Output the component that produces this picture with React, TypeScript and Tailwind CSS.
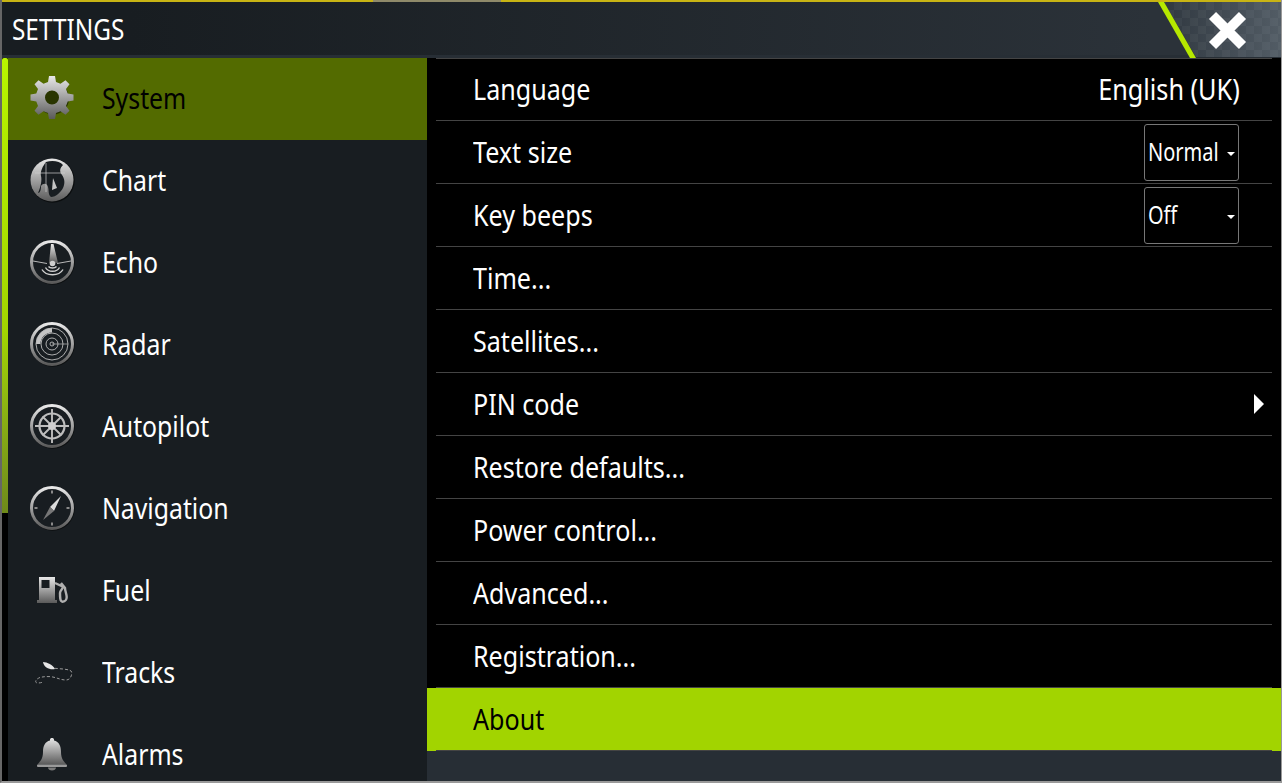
import { ReactNode } from 'react';

const font = { fontFamily: '"Noto Sans", "Open Sans", sans-serif' };

function Silver({ id }: { id: string }) {
  return (
    <defs>
      <linearGradient id={id} x1="0" y1="0" x2="0" y2="1">
        <stop offset="0" stopColor="#e8e8e8" />
        <stop offset="1" stopColor="#5a5a5a" />
      </linearGradient>
    </defs>
  );
}

function Ring({ id }: { id: string }) {
  return (
    <>
      <Silver id={id} />
      <circle cx="24.7" cy="24.7" r="22" fill="#000" opacity="0.55" />
      <circle cx="24" cy="24" r="20.5" fill="#181d21" stroke={`url(#${id})`} strokeWidth="3" />
    </>
  );
}

function Icon({ children }: { children: ReactNode }) {
  return (
    <svg width="48" height="48" viewBox="0 0 48 48" className="-mt-[2px] shrink-0">
      {children}
    </svg>
  );
}

const GearIcon = () => (
  <Icon>
    <Silver id="gear" />
    <g transform="translate(0 -0.5)">
      <circle cx="25" cy="25" r="16" fill="#000" opacity="0.5" />
      <path
        fillRule="evenodd"
        fill="url(#gear)"
        d="M21 2.5H27L28 8.5L32.5 10.3L37.5 6.8L41.5 10.8L38 15.5L39.7 20L45.5 21V27L39.7 28L38 32.5L41.5 37.2L37.5 41.2L32.5 37.7L28 39.5L27 45.5H21L20 39.5L15.5 37.7L10.5 41.2L6.5 37.2L10 32.5L8.3 28L2.5 27V21L8.3 20L10 15.5L6.5 10.8L10.5 6.8L15.5 10.3L20 8.5ZM24 17A7 7 0 1 0 24 31A7 7 0 1 0 24 17Z"
      />
    </g>
  </Icon>
);

const ChartIcon = () => (
  <Icon>
    <Silver id="chart" />
    <circle cx="24.7" cy="24.7" r="22" fill="#000" opacity="0.55" />
    <circle cx="24" cy="24" r="21.5" fill="url(#chart)" />
    <path
      d="M18 6C24 4 32 5 35 9C32 12 31 15 34 19C37 23 37 28 35 32C33 36 28 41 23 41C20 39 21 34 20 31C19 27 15 27 13 30C13 34 12 37 10 37C13 30 14 24 13 20C12 15 15 10 18 6Z"
      fill="#181d21"
    />
    <path d="M25 22L29 32L24 34Z" fill="#c4c4c4" />
    <path d="M7 17H37M18 7V36" stroke="#cfcfcf" strokeWidth="0.7" />
  </Icon>
);

const EchoIcon = () => (
  <Icon>
    <Ring id="echo" />
    <path d="M23 6H25.5L30 25H21Z" fill="url(#echo)" />
    <path d="M5 23L19 25.5M29 25.5L43 23" stroke="#b8b8b8" strokeWidth="1" />
    <circle cx="24.5" cy="25.5" r="2.8" fill="#cfcfcf" />
    <path
      d="M20.5 28.5C22 30.5 27 30.5 28.5 28.5M17.5 29.5C20 34.5 29 34.5 31.5 29.5M14 31.5C18 38.5 31 38.5 35 31.5"
      fill="none"
      stroke="#cfcfcf"
      strokeWidth="1.4"
    />
  </Icon>
);

const RadarIcon = () => (
  <Icon>
    <Ring id="radar" />
    <path d="M8 24A16 16 0 0 1 24 8V12.5A11.5 11.5 0 0 0 12.5 24Z" fill="#c4c4c4" />
    <g fill="none" stroke="#bdbdbd" strokeWidth="0.9">
      <circle cx="24" cy="24" r="16" />
      <circle cx="24" cy="24" r="11" />
      <circle cx="24" cy="24" r="6" />
      <circle cx="24" cy="24" r="2" />
      <path d="M24 24H40" strokeWidth="0.7" />
    </g>
  </Icon>
);

const AutopilotIcon = () => (
  <Icon>
    <Ring id="pilot" />
    <g fill="none" stroke="#bdbdbd">
      <circle cx="24" cy="24" r="12.5" strokeWidth="2.2" />
      <path d="M24 7V41M7 24H41M14.5 14.5L33.5 33.5M33.5 14.5L14.5 33.5" strokeWidth="1.9" />
    </g>
    <circle cx="24" cy="24" r="4" fill="#cfcfcf" />
  </Icon>
);

const NavigationIcon = () => (
  <Icon>
    <Ring id="nav" />
    <path d="M33 12L26 27L22 23Z" fill="#dcdcdc" />
    <path d="M15 36L22 23L26 27Z" fill="#777" />
    <g fill="#8a8a8a">
      <rect x="23" y="6.5" width="2" height="3" />
      <rect x="23" y="38.5" width="2" height="3" />
      <rect x="6.5" y="23" width="3" height="2" />
      <rect x="38.5" y="23" width="3" height="2" />
    </g>
  </Icon>
);

const FuelIcon = () => (
  <Icon>
    <Silver id="fuel" />
    <path fillRule="evenodd" d="M11 11H27V34H29V37H9V34H11ZM13.5 14V22H21.5V14Z" fill="url(#fuel)" />
    <path
      d="M27 17L35 20.7C35 23 32 24 32 27C32 31 32 35.7 34.5 35.7C37.5 35.7 38.7 33 38.7 31C38.7 28 37 25 37 22L33 17"
      fill="none"
      stroke="#b0b0b0"
      strokeWidth="2.4"
    />
  </Icon>
);

const TracksIcon = () => (
  <Icon>
    <path d="M15 14C19 14 25 17 27 21C22 22 16 20 15 14Z" fill="#e6e6e6" />
    <path
      d="M27 20.3C33 21 43 21 43.7 24C44 28 42 32 38 32C32 32 28 29 22 28.6C17 28.4 12 29 10.3 30.3C7 32 7 35 9.5 35C12 35 14 34.5 15 34"
      fill="none"
      stroke="#9a9a9a"
      strokeWidth="1"
      strokeDasharray="3 2"
    />
  </Icon>
);

const AlarmIcon = () => (
  <Icon>
    <Silver id="bell" />
    <path
      d="M22 9.5C22 7.5 26 7.5 26 9.5V10.5C31 11.5 33 16 33 22C33 29 36 31.5 38.5 34.5H9.5C12 31.5 15 29 15 22C15 16 17 11.5 22 10.5Z"
      fill="url(#bell)"
    />
    <rect x="9" y="34.5" width="30" height="2.5" rx="1" fill="#9a9a9a" />
    <path d="M20 37.5H28C28 41.5 20 41.5 20 37.5Z" fill="#7a7a7a" />
  </Icon>
);

const menu = [
  { name: 'System', icon: <GearIcon />, active: true },
  { name: 'Chart', icon: <ChartIcon /> },
  { name: 'Echo', icon: <EchoIcon /> },
  { name: 'Radar', icon: <RadarIcon /> },
  { name: 'Autopilot', icon: <AutopilotIcon /> },
  { name: 'Navigation', icon: <NavigationIcon /> },
  { name: 'Fuel', icon: <FuelIcon /> },
  { name: 'Tracks', icon: <TracksIcon /> },
  { name: 'Alarms', icon: <AlarmIcon /> },
];

const rows = [
  'Language',
  'Text size',
  'Key beeps',
  'Time...',
  'Satellites...',
  'PIN code',
  'Restore defaults...',
  'Power control...',
  'Advanced...',
  'Registration...',
  'About',
];

function Dropdown({ value }: { value: string }) {
  return (
    <div className="mr-[33px] flex h-[57px] w-[95px] items-center justify-between rounded-[3px] border border-[#777] pl-[3px] pr-[3px] text-[25px]">
      <span className="inline-block w-[72px] origin-left scale-x-[.8] whitespace-nowrap">{value}</span>
      <span className="mt-[3px] h-0 w-0 border-x-[4px] border-t-[4px] border-x-transparent border-t-white" />
    </div>
  );
}

function RowRight({ name }: { name: string }) {
  if (name === 'Language') return <span className="mr-[32px] inline-block origin-right scale-x-[.87]">English (UK)</span>;
  if (name === 'Text size') return <Dropdown value="Normal" />;
  if (name === 'Key beeps') return <Dropdown value="Off" />;
  if (name === 'PIN code')
    return <span className="mr-[8px] h-0 w-0 border-y-[10px] border-l-[10px] border-y-transparent border-l-white" />;
  return null;
}

export default function App() {
  return (
    <div
      style={font}
      className="flex h-[783px] w-[1282px] flex-col overflow-hidden border-r border-b-2 border-l-2 border-r-[#999] border-b-[#999] border-l-[#666] bg-[#272e35] text-white"
    >
      <div className="flex h-[2px] shrink-0">
        <div className="w-[371px] bg-[#c8b414]" />
        <div className="w-[128px] bg-[#8f8a6a]" />
        <div className="flex-1 bg-[#c8b414]" />
      </div>

      <header className="relative flex h-[53px] shrink-0 items-center bg-gradient-to-r from-[#181d21] from-10% to-[#2b3239] to-90% pl-[10px] text-[29px]">
        <span className="inline-block origin-left scale-x-[.84]">SETTINGS</span>
        <svg className="absolute right-0 top-0 z-10" width="123" height="56" viewBox="0 0 123 56">
          <defs>
            <linearGradient id="closeBg" x1="0" y1="0" x2="1" y2="0">
              <stop offset="0" stopColor="#303840" />
              <stop offset="1" stopColor="#525c65" />
            </linearGradient>
            <pattern id="check" width="16" height="16" patternUnits="userSpaceOnUse">
              <rect width="8" height="8" fill="#fff" opacity="0.035" />
              <rect x="8" y="8" width="8" height="8" fill="#fff" opacity="0.035" />
            </pattern>
          </defs>
          <path d="M6 0H123V55H38Z" fill="url(#closeBg)" />
          <path d="M6 0H123V55H38Z" fill="url(#check)" />
          <path d="M0 0H6L38 56H32Z" fill="#b6e800" />
          <path d="M54.5 13.5L84.5 43.5M84.5 13.5L54.5 43.5" stroke="#fff" strokeWidth="10" />
        </svg>
      </header>

      <div className="h-[3px] shrink-0 bg-[#272e35]" />

      <div className="flex min-h-0 flex-1">
        <div className="relative w-[6px] shrink-0 bg-black">
          <div className="absolute left-0 top-0 h-[455px] w-full rounded-t-[2px] bg-gradient-to-b from-[#b8f500] via-[#a2d400] via-60% to-[#6f8a1a]" />
        </div>

        <nav className="w-[419px] shrink-0 overflow-hidden bg-[#181d21] text-[29px]">
          {menu.map(item => (
            <div
              key={item.name}
              className={`flex h-[82px] items-center gap-[26px] pl-[20px] ${item.active ? 'bg-[#536b00] text-black' : ''}`}
            >
              {item.icon}
              <span className="-mt-[2px] inline-block origin-left scale-x-[.855]">{item.name}</span>
            </div>
          ))}
        </nav>

        <main className="min-w-0 flex-1 text-[29px]">
          {rows.map((name, i) => {
            const selected = name === 'About';
            return (
              <div key={name} className={selected ? 'bg-[#a2d400] text-black' : 'bg-black'}>
                <div
                  className={`ml-[9px] mr-[9px] flex h-[63px] items-center justify-between border-b border-[#444] pl-[37px] ${i === 0 ? 'border-t pb-[2px]' : ''}`}
                >
                  <span className="inline-block origin-left scale-x-[.865]">{name}</span>
                  <RowRight name={name} />
                </div>
              </div>
            );
          })}
        </main>
      </div>
    </div>
  );
}
